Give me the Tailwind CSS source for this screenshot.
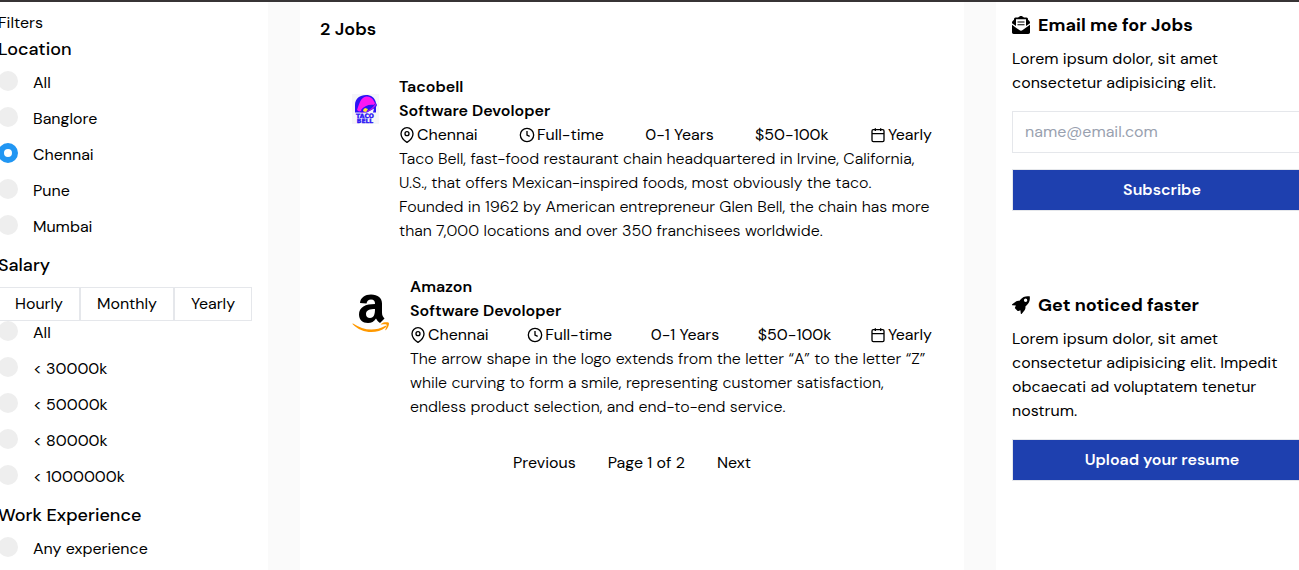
<!DOCTYPE html>
<html lang="en">
<head>
<meta charset="utf-8">
<meta name="viewport" content="width=device-width, initial-scale=1">
<title>Jobs</title>
<script src="https://cdn.jsdelivr.net/npm/@tailwindcss/browser@4"></script>
</head>
<body class="overflow-x-hidden bg-[#fafafa] font-['DM_Sans','Inter',sans-serif] text-base font-normal text-black">
<svg class="hidden" aria-hidden="true">
  <symbol id="pin" viewBox="0 0 24 24"><path d="M21 10c0 7-9 13-9 13s-9-6-9-13a9 9 0 0 1 18 0z"/><circle cx="12" cy="10" r="3"/></symbol>
  <symbol id="clock" viewBox="0 0 24 24"><circle cx="12" cy="12" r="10"/><path d="M12 6v6l4 2"/></symbol>
  <symbol id="calendar" viewBox="0 0 24 24"><rect x="3" y="4" width="18" height="18" rx="2"/><path d="M16 2v4M8 2v4M3 10h18"/></symbol>
</svg>
<div class="min-h-screen overflow-hidden border-t-2 border-[#373435]">
  <div class="-mr-[29px] grid min-h-screen grid-cols-[268px_minmax(0,1fr)_332px] gap-8">

    <aside class="bg-white pt-[9px]">
      <div class="-ml-0.5">
        <p>Filters</p>
        <fieldset>
          <legend class="mb-2 text-lg font-medium leading-7">Location</legend>
          <label class="mb-3 flex gap-[15px]"><input type="radio" name="loc" class="size-5 appearance-none rounded-full bg-[#eee] checked:border-[6px] checked:border-[#2196f3] checked:bg-white"><span>All</span></label>
          <label class="mb-3 flex gap-[15px]"><input type="radio" name="loc" class="size-5 appearance-none rounded-full bg-[#eee] checked:border-[6px] checked:border-[#2196f3] checked:bg-white"><span>Banglore</span></label>
          <label class="mb-3 flex gap-[15px]"><input type="radio" name="loc" checked class="size-5 appearance-none rounded-full bg-[#eee] checked:border-[6px] checked:border-[#2196f3] checked:bg-white"><span>Chennai</span></label>
          <label class="mb-3 flex gap-[15px]"><input type="radio" name="loc" class="size-5 appearance-none rounded-full bg-[#eee] checked:border-[6px] checked:border-[#2196f3] checked:bg-white"><span>Pune</span></label>
          <label class="mb-3 flex gap-[15px]"><input type="radio" name="loc" class="size-5 appearance-none rounded-full bg-[#eee] checked:border-[6px] checked:border-[#2196f3] checked:bg-white"><span>Mumbai</span></label>
        </fieldset>
        <fieldset>
          <legend class="mb-2 text-lg font-medium leading-7">Salary</legend>
          <div class="flex">
            <button type="button" class="border border-gray-200 px-4 py-1">Hourly</button>
            <button type="button" class="border border-gray-200 px-4 py-1">Monthly</button>
            <button type="button" class="border border-gray-200 px-4 py-1">Yearly</button>
          </div>
          <label class="mb-3 flex gap-[15px]"><input type="radio" name="pay" class="size-5 appearance-none rounded-full bg-[#eee] checked:border-[6px] checked:border-[#2196f3] checked:bg-white"><span>All</span></label>
          <label class="mb-3 flex gap-[15px]"><input type="radio" name="pay" class="size-5 appearance-none rounded-full bg-[#eee] checked:border-[6px] checked:border-[#2196f3] checked:bg-white"><span>&lt; 30000k</span></label>
          <label class="mb-3 flex gap-[15px]"><input type="radio" name="pay" class="size-5 appearance-none rounded-full bg-[#eee] checked:border-[6px] checked:border-[#2196f3] checked:bg-white"><span>&lt; 50000k</span></label>
          <label class="mb-3 flex gap-[15px]"><input type="radio" name="pay" class="size-5 appearance-none rounded-full bg-[#eee] checked:border-[6px] checked:border-[#2196f3] checked:bg-white"><span>&lt; 80000k</span></label>
          <label class="mb-3 flex gap-[15px]"><input type="radio" name="pay" class="size-5 appearance-none rounded-full bg-[#eee] checked:border-[6px] checked:border-[#2196f3] checked:bg-white"><span>&lt; 1000000k</span></label>
        </fieldset>
        <fieldset>
          <legend class="mb-2 text-lg font-medium leading-7">Work Experience</legend>
          <label class="flex gap-[15px]"><input type="radio" name="exp" class="size-5 appearance-none rounded-full bg-[#eee] checked:border-[6px] checked:border-[#2196f3] checked:bg-white"><span>Any experience</span></label>
        </fieldset>
      </div>
    </aside>

    <main class="bg-white px-5 pt-[13px]">
      <h1 class="text-lg font-semibold leading-7">2 Jobs</h1>
      <div class="mt-8 flex flex-col gap-8 pl-8 pr-3">
        <article class="flex gap-5">
          <svg class="mt-[19px] h-[30px] w-[27px] shrink-0" viewBox="0 0 27 30" role="img" aria-label="Taco Bell">
            <path fill="#f6f6f8" d="M0 0h27v30H0z"/>
            <path fill="#2a12f5" d="M3 18.500V11C3 4.500 8 1 14 1c5 0 9 2.500 10 8l1 2-1 2v5.500h-3l1-4-7 4z"/>
            <path fill="#fb17f2" d="M5 16C7 11 8 4 14 2.500c5-.8 8 3.500 9 7-3 3-10 7-16 8z"/>
            <path fill="#b012f0" d="M8 18c6-1 13-5 16-9v2c-2 4-8 7.500-14 7.500z"/>
            <path fill="#2a12f5" d="M9 16c3-4 8-6 13-5-2 4-8 7-12 7z"/>
            <path fill="#ffe924" d="M11 16l2-2 3 1-2 3c-2 0-3-1-3-2z"/>
            <text x="13" y="24" text-anchor="middle" font-family="DejaVu Sans" font-weight="700" font-size="6" fill="#2a12f5" stroke="#2a12f5" stroke-width=".4">TACO</text>
            <text x="13" y="29" text-anchor="middle" font-family="DejaVu Sans" font-weight="700" font-size="6" fill="#2a12f5" stroke="#2a12f5" stroke-width=".4">BELL</text>
          </svg>
          <div class="min-w-0 flex-1">
            <h2 class="font-semibold">Tacobell</h2>
            <h3 class="font-semibold">Software Devoloper</h3>
            <ul class="flex justify-between">
              <li class="flex items-center gap-0.5"><svg class="size-4 fill-none stroke-current stroke-2"><use href="#pin"/></svg>Chennai</li>
              <li class="flex items-center gap-0.5"><svg class="size-4 fill-none stroke-current stroke-2"><use href="#clock"/></svg>Full-time</li>
              <li>0-1 Years</li>
              <li>$50-100k</li>
              <li class="flex items-center gap-0.5"><svg class="size-4 fill-none stroke-current stroke-2"><use href="#calendar"/></svg>Yearly</li>
            </ul>
            <p class="font-light">Taco Bell, fast-food restaurant chain headquartered in Irvine, California, U.S., that offers Mexican-inspired foods, most obviously the taco. Founded in 1962 by American entrepreneur Glen Bell, the chain has more than 7,000 locations and over 350 franchisees worldwide.</p>
          </div>
        </article>
        <article class="flex gap-5">
          <svg class="mt-[18px] h-10 w-[38px] shrink-0" viewBox="0 0 38 40" role="img" aria-label="Amazon">
            <path fill="#000" fill-rule="evenodd" d="M8 10C8.500 4.500 13 1.500 19 1.500c7 0 11 3.500 11 9v9c0 3 1 4 2.500 6L28 30c-2-1.500-3-2.500-4-4.500-2 3-4.500 4.500-8 4.500-5.500 0-9-3.500-9-8.500 0-7.500 6.500-10.500 16-10.500 0-3-1-4.500-4-4.500-2.500 0-4 1.500-4.500 4zM23 16c-5 0-9 1-9 5 0 2.500 1.500 4 4 4 4 0 5-4 5-9z"/>
            <path fill="#ff9900" d="M1 30.500c10 7 22 8 32 2.500 1-.5 1.800.4.800 1.200C24 42 9 40 .7 31.300c-.4-.5-.2-1 .3-.8z"/>
            <path fill="#ff9900" d="M29 31c2.500-2 6-1.900 7.800-1.200.7 1.500-.8 5.400-2.800 7.200-.6.400-.9.100-.6-.4.8-1.700 1.500-4.200 1.100-5-.6-.5-3.200-.3-5 0-.7 0-.9-.2-.5-.6z"/>
          </svg>
          <div class="min-w-0 flex-1">
            <h2 class="font-semibold">Amazon</h2>
            <h3 class="font-semibold">Software Devoloper</h3>
            <ul class="flex justify-between">
              <li class="flex items-center gap-0.5"><svg class="size-4 fill-none stroke-current stroke-2"><use href="#pin"/></svg>Chennai</li>
              <li class="flex items-center gap-0.5"><svg class="size-4 fill-none stroke-current stroke-2"><use href="#clock"/></svg>Full-time</li>
              <li>0-1 Years</li>
              <li>$50-100k</li>
              <li class="flex items-center gap-0.5"><svg class="size-4 fill-none stroke-current stroke-2"><use href="#calendar"/></svg>Yearly</li>
            </ul>
            <p class="font-light">The arrow shape in the logo extends from the letter “A” to the letter “Z” while curving to form a smile, representing customer satisfaction, endless product selection, and end-to-end service.</p>
          </div>
        </article>
      </div>
      <nav class="mt-8 flex justify-center gap-8" aria-label="Pagination">
        <button type="button">Previous</button>
        <span>Page 1 of 2</span>
        <button type="button">Next</button>
      </nav>
    </main>

    <aside class="bg-white px-4 pt-[9px]">
      <form>
        <h2 class="mb-2 flex items-center gap-2 text-lg font-bold leading-7">
          <svg class="size-[18px]" viewBox="0 0 18 18" aria-hidden="true">
            <path d="M9 0c1 0 2 .7 3 1.500h2.500A1.500 1.500 0 0 1 16 3v.8l1.300 1.100c.5.400.7.900.7 1.500V16.300c0 1-.7 1.700-1.700 1.700H1.700C.7 18 0 17.300 0 16.300V6.400c0-.6.2-1.100.7-1.500L2 3.800V3a1.500 1.500 0 0 1 1.500-1.500H6C7 .7 8 0 9 0z"/>
            <path fill="#fff" d="M4 3.300h10v6.800l4-2.900v1.600l-7.300 5.300c-1.100.8-2.300.8-3.400 0L0 8.800V7.200l4 2.900z"/>
            <path d="M5.500 5.500h7v1h-7zM5.500 8.200h7v1h-7z"/>
          </svg>
          Email me for Jobs
        </h2>
        <p class="max-w-[276px]">Lorem ipsum dolor, sit amet<br>consectetur adipisicing elit.</p>
        <input type="email" aria-label="Email address" placeholder="name@email.com" class="mt-4 block w-full border border-gray-200 px-3 py-2 leading-6 placeholder:text-gray-400">
        <button type="submit" class="mt-4 block w-full border border-gray-200 bg-[#1e40af] py-2 font-semibold text-white">Subscribe</button>
      </form>
      <section class="mt-20">
        <h2 class="mb-2 flex items-center gap-2 text-lg font-bold leading-7">
          <svg class="size-[18px]" viewBox="0 0 18 18" aria-hidden="true">
            <path fill-rule="evenodd" d="M17.700.3C14 -.3 10.800.6 8.300 3.800L7.500 4.700c-1.600-.2-2.700 0-3.500.7L.2 8.300c-.4.500-.2 1 .4 1l3.300.3-.9 1.900c-.2.400-.1.800.2 1.100l2.200 2.200c.3.300.7.400 1.100.2l1.900-.8.4 3.200c.1.600.6.700 1 .3l3-3.700c.6-.8.800-1.900.6-3.500l.8-.8c3.200-2.500 4.100-5.700 3.500-9.400zM13.600 6a1.700 1.700 0 1 1 0-3.400 1.700 1.700 0 0 1 0 3.400z"/>
          </svg>
          Get noticed faster
        </h2>
        <p class="max-w-[276px]">Lorem ipsum dolor, sit amet<br>consectetur adipisicing elit. Impedit obcaecati ad voluptatem tenetur nostrum.</p>
        <button type="button" class="mt-4 block w-full border border-gray-200 bg-[#1e40af] py-2 font-semibold text-white">Upload your resume</button>
      </section>
    </aside>
  </div>
</div>
</body>
</html>
